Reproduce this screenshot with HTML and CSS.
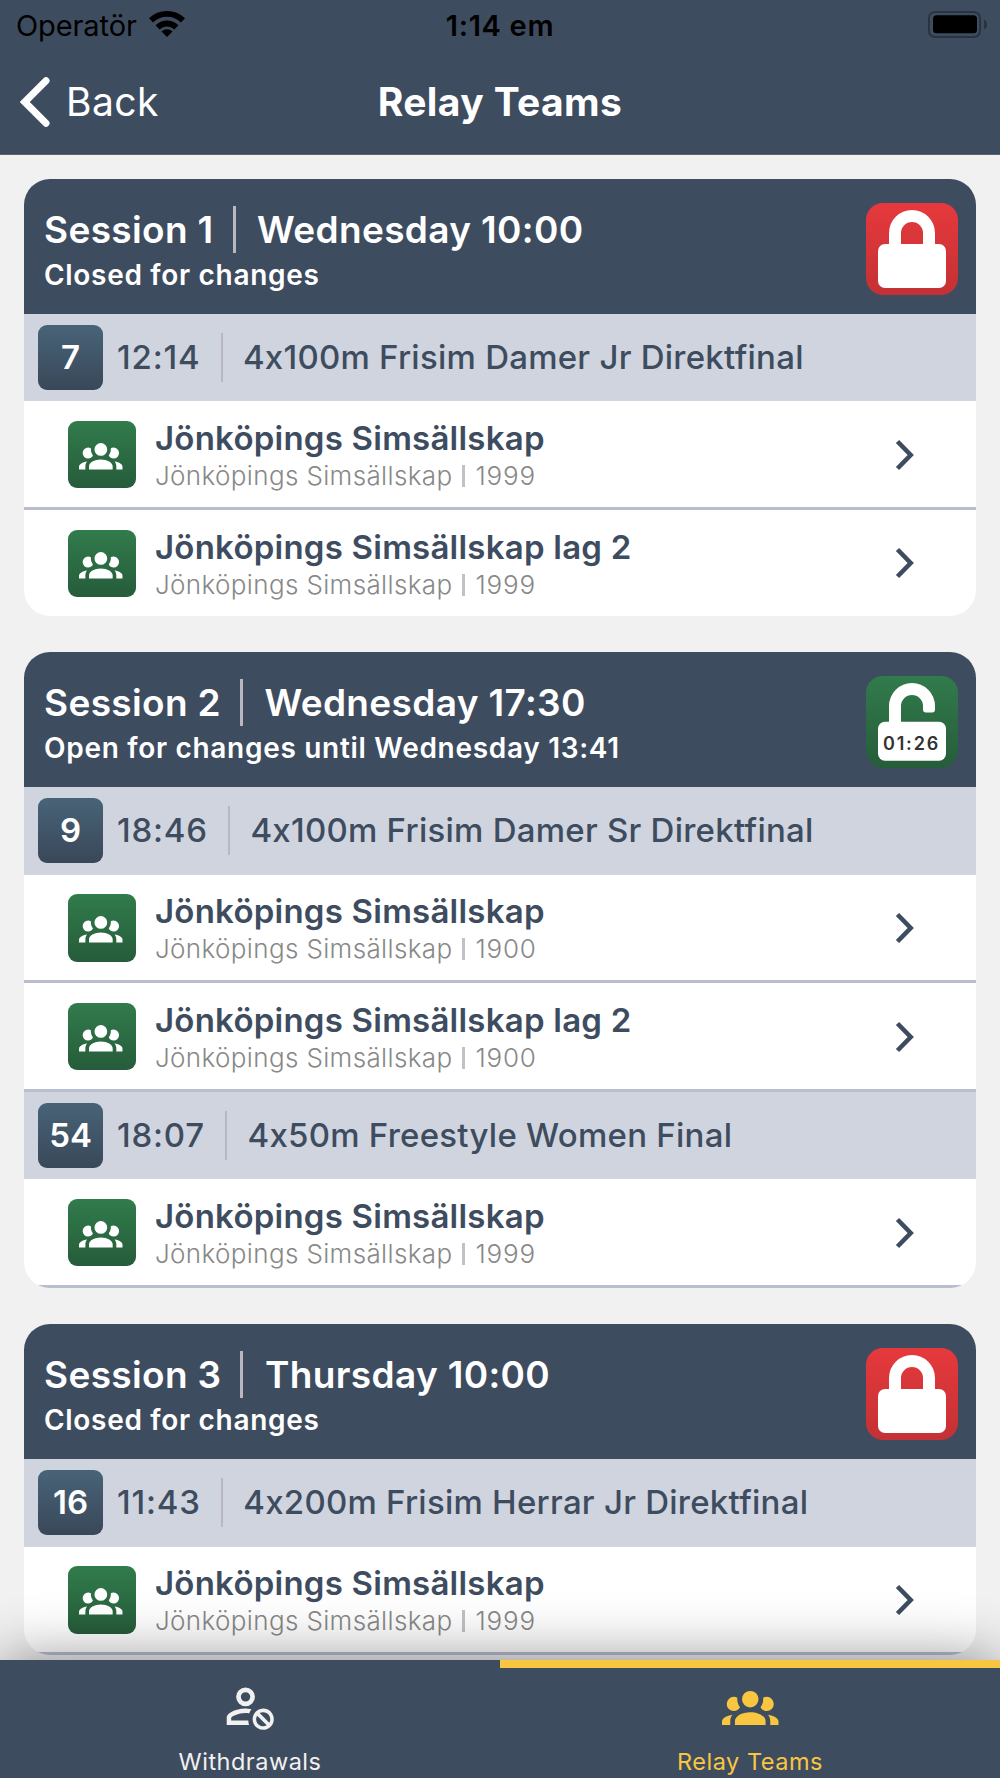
FILE: index.html
```html
<!DOCTYPE html>
<html lang="en">
	<head>
		<meta charset="UTF-8">
		<title>Relay Teams</title>
		<link rel="stylesheet" href="styles.css">
	</head>
	<body>
		<svg class="sprite" width="0" height="0">
			<symbol id="group" viewBox="0 0 24 24">
				<path d="M12,5.5A3.5,3.5 0 0,1 15.5,9A3.5,3.5 0 0,1 12,12.5A3.5,3.5 0 0,1 8.5,9A3.5,3.5 0 0,1 12,5.5M5,8C5.56,8 6.08,8.15 6.53,8.42C6.38,9.85 6.8,11.27 7.66,12.38C7.16,13.34 6.16,14 5,14A3,3 0 0,1 2,11A3,3 0 0,1 5,8M19,8A3,3 0 0,1 22,11A3,3 0 0,1 19,14C17.84,14 16.84,13.34 16.34,12.38C17.2,11.27 17.62,9.85 17.47,8.42C17.92,8.15 18.44,8 19,8M5.5,18.25C5.5,16.18 8.41,14.5 12,14.5C15.59,14.5 18.5,16.18 18.5,18.25V20H5.5V18.25M0,20V18.5C0,17.11 1.89,15.94 4.45,15.6C3.86,16.28 3.5,17.22 3.5,18.25V20H0M24,20H20.5V18.25C20.5,17.22 20.14,16.28 19.55,15.6C22.11,15.94 24,17.11 24,18.5V20Z" />
			</symbol>
			<symbol id="withdraw" viewBox="0 0 24 24">
				<path d="M10 4A4 4 0 0 0 6 8A4 4 0 0 0 10 12A4 4 0 0 0 14 8A4 4 0 0 0 10 4M10 6A2 2 0 0 1 12 8A2 2 0 0 1 10 10A2 2 0 0 1 8 8A2 2 0 0 1 10 6M17.5 13C15 13 13 15 13 17.5C13 20 15 22 17.5 22C20 22 22 20 22 17.5C22 15 20 13 17.5 13M10 13C7.33 13 2 14.33 2 17V20H11.5A6.5 6.5 0 0 1 11.17 18.1H3.9V17C3.9 16.36 7.03 14.9 10 14.9C10.5 14.9 11 14.95 11.5 15.03A6.5 6.5 0 0 1 12.55 13.29C11.61 13.1 10.71 13 10 13M17.5 14.5C19.16 14.5 20.5 15.84 20.5 17.5C20.5 18.06 20.35 18.58 20.08 19L16 14.92C16.42 14.65 16.94 14.5 17.5 14.5M14.92 16L19 20.08C18.58 20.35 18.06 20.5 17.5 20.5C15.84 20.5 14.5 19.16 14.5 17.5C14.5 16.94 14.65 16.42 14.92 16Z" />
			</symbol>
			<symbol id="locked" viewBox="0 0 92 92">
				<path d="M29 43V30a17 17 0 0 1 34 0v13" fill="none" stroke="#fff" stroke-width="12" />
				<rect x="12" y="41" width="68" height="44" rx="7" fill="#fff" />
			</symbol>
			<symbol id="unlocked" viewBox="0 0 92 92">
				<path d="M23 48V30a23 23 0 0 1 46 0v3.500q0 3 -3 3h-6q-3 0 -3 -3v-3.500a11 11 0 0 0 -22 0v18z" fill="#fff" />
				<rect x="12" y="45.700" width="68" height="39" rx="7" fill="#fff" />
			</symbol>
			<symbol id="next" viewBox="0 0 20 32">
				<path d="M2.500 2.500L15.700 16L2.500 29.500" fill="none" stroke="#3e4c5f" stroke-width="4.600" />
			</symbol>
		</svg>

		<div class="status">
			<div class="status-left">
				<span>Operatör</span>
				<svg class="wifi" viewBox="0 0 36 27">
					<path d="M18 27l-5.500-5.400a7.700 7.700 0 0 1 11 0z" />
					<path d="M8.600 17.400a13.300 13.300 0 0 1 18.800 0M2 10.400a22.800 22.800 0 0 1 32 0" fill="none" stroke="#000" stroke-width="5.800" />
				</svg>
			</div>
			<div class="status-time">1:14 em</div>
			<div class="status-right">
				<svg class="battery" viewBox="0 0 59 27">
					<rect x="1" y="1" width="51" height="25" rx="6" fill="none" stroke="#2a333f" stroke-width="2" />
					<rect x="5" y="4.200" width="44" height="18" rx="3.500" />
					<path d="M56 8.500q3 1.500 3 5t-3 5z" fill="#2a333f" />
				</svg>
			</div>
		</div>

		<div class="nav">
			<a class="back">
				<svg class="back-icon" viewBox="0 0 30 50">
					<path d="M26 3.800L4.800 25L26 46.200" fill="none" stroke="#fff" stroke-width="7" stroke-linecap="round" stroke-linejoin="miter" />
				</svg>
				<span>Back</span>
			</a>
			<h1 class="nav-title">Relay Teams</h1>
		</div>

		<div class="content">
			<div class="card">
				<div class="card-head">
					<div class="card-info">
						<div class="card-title"><span>Session 1</span><i class="line"></i><span>Wednesday 10:00</span></div>
						<div class="card-sub">Closed for changes</div>
					</div>
					<div class="lock lock-red"><svg><use href="#locked" /></svg></div>
				</div>
				<div class="event">
					<div class="event-no">7</div>
					<div class="event-time">12:14</div>
					<div class="event-name">4x100m Frisim Damer Jr Direktfinal</div>
				</div>
				<div class="team">
					<div class="team-icon"><svg><use href="#group" /></svg></div>
					<div class="team-info">
						<div class="team-name">Jönköpings Simsällskap</div>
						<div class="team-club"><span>Jönköpings Simsällskap</span><i></i><span class="year">1999</span></div>
					</div>
					<svg class="next"><use href="#next" /></svg>
				</div>
				<div class="team no-line">
					<div class="team-icon"><svg><use href="#group" /></svg></div>
					<div class="team-info">
						<div class="team-name">Jönköpings Simsällskap lag 2</div>
						<div class="team-club"><span>Jönköpings Simsällskap</span><i></i><span class="year">1999</span></div>
					</div>
					<svg class="next"><use href="#next" /></svg>
				</div>
			</div>

			<div class="card">
				<div class="card-head">
					<div class="card-info">
						<div class="card-title"><span>Session 2</span><i class="line"></i><span>Wednesday 17:30</span></div>
						<div class="card-sub">Open for changes until Wednesday 13:41</div>
					</div>
					<div class="lock lock-green"><svg><use href="#unlocked" /></svg><span class="countdown">01:26</span></div>
				</div>
				<div class="event">
					<div class="event-no">9</div>
					<div class="event-time">18:46</div>
					<div class="event-name">4x100m Frisim Damer Sr Direktfinal</div>
				</div>
				<div class="team">
					<div class="team-icon"><svg><use href="#group" /></svg></div>
					<div class="team-info">
						<div class="team-name">Jönköpings Simsällskap</div>
						<div class="team-club"><span>Jönköpings Simsällskap</span><i></i><span class="year">1900</span></div>
					</div>
					<svg class="next"><use href="#next" /></svg>
				</div>
				<div class="team">
					<div class="team-icon"><svg><use href="#group" /></svg></div>
					<div class="team-info">
						<div class="team-name">Jönköpings Simsällskap lag 2</div>
						<div class="team-club"><span>Jönköpings Simsällskap</span><i></i><span class="year">1900</span></div>
					</div>
					<svg class="next"><use href="#next" /></svg>
				</div>
				<div class="event">
					<div class="event-no">54</div>
					<div class="event-time">18:07</div>
					<div class="event-name">4x50m Freestyle Women Final</div>
				</div>
				<div class="team">
					<div class="team-icon"><svg><use href="#group" /></svg></div>
					<div class="team-info">
						<div class="team-name">Jönköpings Simsällskap</div>
						<div class="team-club"><span>Jönköpings Simsällskap</span><i></i><span class="year">1999</span></div>
					</div>
					<svg class="next"><use href="#next" /></svg>
				</div>
			</div>

			<div class="card">
				<div class="card-head">
					<div class="card-info">
						<div class="card-title"><span>Session 3</span><i class="line"></i><span>Thursday 10:00</span></div>
						<div class="card-sub">Closed for changes</div>
					</div>
					<div class="lock lock-red"><svg><use href="#locked" /></svg></div>
				</div>
				<div class="event">
					<div class="event-no">16</div>
					<div class="event-time">11:43</div>
					<div class="event-name">4x200m Frisim Herrar Jr Direktfinal</div>
				</div>
				<div class="team">
					<div class="team-icon"><svg><use href="#group" /></svg></div>
					<div class="team-info">
						<div class="team-name">Jönköpings Simsällskap</div>
						<div class="team-club"><span>Jönköpings Simsällskap</span><i></i><span class="year">1999</span></div>
					</div>
					<svg class="next"><use href="#next" /></svg>
				</div>
			</div>
		</div>

		<div class="tabs">
			<a class="tab">
				<svg><use href="#withdraw" /></svg>
				<span>Withdrawals</span>
			</a>
			<a class="tab tab-active">
				<svg><use href="#group" /></svg>
				<span>Relay Teams</span>
			</a>
		</div>
	</body>
</html>
```
FILE: styles.css
```css
* {
	margin: 0;
	padding: 0;
	box-sizing: border-box;
}

body {
	display: flex;
	flex-direction: column;
	height: 1778px;
	overflow: hidden;
	background: #f1f1f1;
	font-family: Inter, "Liberation Sans", sans-serif;
	font-feature-settings: "calt" 0;
	color: #3e4c5f;
	white-space: nowrap;
}

.sprite {
	position: absolute;
}

/* status bar */
.status {
	display: grid;
	grid-template-columns: 1fr auto 1fr;
	height: 50px;
	line-height: 51px;
	padding: 0 13px;
	background: #3e4c5f;
	color: #000;
	font-size: 29px;
}

.status-left {
	display: flex;
	gap: 12px;
	padding-left: 3px;
	letter-spacing: -.1px;
}

.wifi {
	width: 36px;
	height: 27px;
	margin-top: 10px;
}

.status-time {
	font-weight: 600;
	letter-spacing: .7px;
}

.status-right {
	display: flex;
	justify-content: flex-end;
}

.battery {
	width: 59px;
	height: 27px;
	margin-top: 11px;
}

/* navigation bar */
.nav {
	display: grid;
	grid-template-columns: 1fr auto 1fr;
	align-items: center;
	height: 105px;
	padding: 0 20px 1px;
	border-bottom: 1px solid #5b6576;
	background: #3e4c5f;
	color: #fff;
	font-size: 39px;
	letter-spacing: .4px;
}

.back {
	display: flex;
	align-items: center;
	gap: 16px;
}

.back-icon {
	width: 30px;
	height: 50px;
}

.nav-title {
	font-size: 39px;
	font-weight: 700;
}

/* sessions */
.content {
	flex: 1;
	min-height: 0;
	overflow: hidden;
	padding: 23.700px 24px 0;
}

.card {
	margin-bottom: 36px;
	border-radius: 26px;
	overflow: hidden;
	background: #fff;
}

.card-head {
	display: flex;
	justify-content: space-between;
	height: 135.300px;
	padding: 24px 18.500px 0 20px;
	background: #3e4c5f;
	color: #fff;
	font-weight: 600;
}

.card-info {
	padding-top: 3px;
}

.card-title {
	display: flex;
	font-size: 37px;
	line-height: 47px;
	letter-spacing: .35px;
}

.line {
	width: 3px;
	margin: 0 21.500px 0 19px;
	background: #b9b8c0;
}

.card-sub {
	margin-top: 4px;
	font-size: 28px;
	line-height: 37px;
	letter-spacing: .7px;
}

.lock {
	position: relative;
	width: 92px;
	height: 92px;
	border-radius: 17px;
}

.lock svg {
	display: block;
	width: 92px;
	height: 92px;
}

.lock-red {
	background: linear-gradient(#e6393d, #c33134);
}

.lock-green {
	background: linear-gradient(#317b4c, #265c3a);
}

.countdown {
	position: absolute;
	top: 56px;
	left: 12px;
	width: 68px;
	line-height: 24px;
	text-align: center;
	font-size: 18px;
	letter-spacing: 1.800px;
	color: #333;
}

.event {
	display: flex;
	align-items: center;
	height: 87.300px;
	padding-left: 14px;
	background: #d0d4de;
	font-size: 33px;
	font-weight: 500;
	line-height: 49px;
}

.event-no {
	width: 65px;
	height: 65px;
	border-radius: 9px;
	background: linear-gradient(#486378, #394858);
	color: #fff;
	font-weight: 600;
	line-height: 65px;
	text-align: center;
}

.event-time {
	padding: 0 20.500px 0 14px;
	border-right: 2px solid #b9b8c0;
	letter-spacing: .8px;
}

.event-name {
	padding-left: 20px;
	letter-spacing: .25px;
}

.team {
	display: flex;
	align-items: center;
	height: 108.700px;
	padding: 1px 61px 0 44px;
	border-bottom: 3px solid #b8bdd0;
}

.no-line {
	height: 106px;
	border-bottom: none;
}

.team-icon {
	width: 67.500px;
	height: 67.500px;
	margin-right: 19.500px;
	padding: 12px 11px;
	border-radius: 9px;
	background: linear-gradient(#317b4c, #265c3a);
}

.team-icon svg {
	display: block;
	width: 43.700px;
	height: 43.700px;
	fill: #fff;
}

.team-info {
	flex: 1;
	padding-top: 2px;
}

.team-name {
	font-size: 33px;
	font-weight: 600;
	line-height: 39px;
	letter-spacing: .23px;
}

.team-club {
	display: flex;
	align-items: center;
	margin-top: 2px;
	font-size: 26px;
	font-weight: 300;
	line-height: 32px;
	letter-spacing: .36px;
	color: #888;
}

.team-club i {
	width: 3px;
	height: 22px;
	margin: 0 10px;
	background: #c2c1c8;
}

.team-club .year {
	letter-spacing: .8px;
}

.next {
	width: 20px;
	height: 32px;
}

/* tab bar */
.tabs {
	position: relative;
	display: flex;
	height: 118px;
	background: #3e4c5f;
	box-shadow: 0 0 60px rgba(0, 0, 0, .45);
}

.tab {
	flex: 1;
	display: flex;
	flex-direction: column;
	align-items: center;
	padding-top: 9.500px;
	border-top: 8px solid transparent;
	color: #f1f1f1;
	font-size: 23.500px;
	letter-spacing: .5px;
}

.tab svg {
	width: 60.500px;
	height: 60.500px;
	fill: currentColor;
}

.tab span {
	margin-top: 12px;
	line-height: 32px;
}

.tab-active {
	border-top-color: #f9c642;
	color: #f9c642;
}
```
